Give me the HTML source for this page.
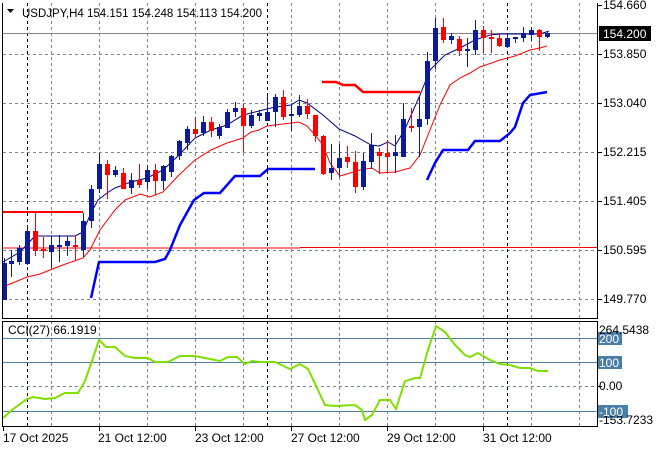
<!DOCTYPE html>
<html><head><meta charset="utf-8"><style>
html,body{margin:0;padding:0;background:#fff;}
svg{display:block;font-family:"Liberation Sans","DejaVu Sans",sans-serif;}
</style></head><body>
<svg width="660" height="450" viewBox="0 0 660 450" xmlns="http://www.w3.org/2000/svg">
<rect width="660" height="450" fill="#fff"/>
<g stroke="#7a8494" stroke-width="1" stroke-dasharray="3,3" fill="none">
<path d="M3 54.5H597M3 103.5H597M3 152.5H597M3 201.5H597M3 250.5H597M3 299.5H597"/>
<path d="M51.5 3V318M99.5 3V318M147.5 3V318M195.5 3V318M243.5 3V318M291.5 3V318M339.5 3V318M387.5 3V318M435.5 3V318M483.5 3V318M531.5 3V318M579.5 3V318"/>
<path d="M51.5 321V426M99.5 321V426M147.5 321V426M195.5 321V426M243.5 321V426M291.5 321V426M339.5 321V426M387.5 321V426M435.5 321V426M483.5 321V426M531.5 321V426M579.5 321V426"/>
<path d="M3 386.5H597"/>
</g>
<g stroke="#000" stroke-width="1" stroke-dasharray="3,3" fill="none">
<path d="M27.5 3V426M267.5 3V426M507.5 3V426"/>
</g>
<path d="M3 33.5H597" stroke="#7a8494" stroke-width="1"/>
<path d="M3 248H300M300 247.5H597" stroke="#ff0000" stroke-width="1"/>
<path d="M3 212H83" stroke="#ff0000" stroke-width="2"/>
<path d="M322 82H336L343 85H355L363 92H420" stroke="#ff0000" stroke-width="2.5" fill="none"/>
<polyline fill="none" stroke="#ff0000" stroke-width="1" points="3,287 27,277 40,274 60,266 83,258 90,250 100,230 115,210 125,200 140,194 150,197 163,192 179,175 195,160 211,150 227,143 243,138 251,132 259,130 267,126 283,124 299,122 307,126 315,135 323,145 330,163 340,176 360,170 372,168 380,173 395,172 410,168 420,155 430,130 440,105 450,85 460,78 470,73 480,67 500,60 515,56 530,50 540,48 547,46"/>
<polyline fill="none" stroke="#000080" stroke-width="1" points="3,262 20,252 35,236 75,236 83,232 90,215 98,200 107,193 115,188 131,182 147,178 163,170 179,155 195,138 211,130 227,125 243,115 259,111 275,107 291,105 299,100 307,103 323,115 339,129 355,136 371,145 379,146 388,142 395,146 405,129 420,95 430,70 445,55 460,48 475,40 490,35 500,34 540,34 549,31"/>
<polyline fill="none" stroke="#0000ff" stroke-width="2.5" points="91,298 99,262 155,262 165,259 170,250 180,225 194,200 204,193 220,193 235,176 260,176 268,169 315,169"/>
<polyline fill="none" stroke="#0000ff" stroke-width="2.5" points="427,180 435,163 443,150 468,150 475,141 500,141 510,133 515,127 523,103 530,95 547,92"/>
<g fill="#0c1aa0" stroke="#0c1aa0">
<path stroke-width="1" fill="none" d="M4.5 258V300M11.5 250V277M19.5 245V265M27.5 226V265M51.5 236V268M59.5 235V262M67.5 236V256M83.5 213V257M91.5 185V228M99.5 153V193M115.5 166V177M131.5 173V194M147.5 165V189M163.5 165V190M171.5 155V177M179.5 140V160M187.5 126V150M203.5 116V136M219.5 124V139M227.5 109V128M235.5 102V117M251.5 110V128M259.5 110V121M267.5 95V121M275.5 94V127M291.5 105V131M299.5 95V117M331.5 144V180M339.5 144V177M363.5 153V190M371.5 133V169M395.5 135V173M403.5 103V157M419.5 97V157M427.5 52V125M435.5 18V69M451.5 33V44M467.5 38V67M475.5 20V55M507.5 33V48M515.5 37V43M523.5 27V42M531.5 27V41M547.5 31V38"/>
<g stroke="none">
<rect x="2" y="263" width="5" height="37"/><rect x="9" y="261" width="5" height="3"/><rect x="17" y="248" width="5" height="14"/><rect x="25" y="231" width="5" height="33"/><rect x="49" y="245" width="5" height="7"/><rect x="57" y="245" width="5" height="2"/><rect x="65" y="241" width="5" height="5"/><rect x="81" y="221" width="5" height="29"/><rect x="89" y="189" width="5" height="32"/><rect x="97" y="164" width="5" height="25"/><rect x="113" y="170" width="5" height="5"/><rect x="129" y="180" width="5" height="8"/><rect x="145" y="170" width="5" height="12"/><rect x="161" y="166" width="5" height="15"/><rect x="169" y="156" width="5" height="16"/><rect x="177" y="141" width="5" height="15"/><rect x="185" y="129" width="5" height="14"/><rect x="201" y="122" width="5" height="11"/><rect x="217" y="127" width="5" height="9"/><rect x="225" y="112" width="5" height="16"/><rect x="233" y="108" width="5" height="4"/><rect x="249" y="115" width="5" height="11"/><rect x="257" y="113" width="5" height="3"/><rect x="265" y="112" width="5" height="9"/><rect x="273" y="97" width="5" height="15"/><rect x="289" y="114" width="5" height="2"/><rect x="297" y="106" width="5" height="9"/><rect x="329" y="168" width="5" height="5"/><rect x="337" y="158" width="5" height="10"/><rect x="361" y="161" width="5" height="26"/><rect x="369" y="145" width="5" height="17"/><rect x="393" y="152" width="5" height="4"/><rect x="401" y="119" width="5" height="38"/><rect x="417" y="119" width="5" height="8"/><rect x="425" y="61" width="5" height="58"/><rect x="433" y="28" width="5" height="33"/><rect x="449" y="36" width="5" height="4"/><rect x="465" y="49" width="5" height="2"/><rect x="473" y="30" width="5" height="20"/><rect x="505" y="38" width="5" height="9"/><rect x="513" y="37" width="5" height="2"/><rect x="521" y="33" width="5" height="5"/><rect x="529" y="30" width="5" height="5"/><rect x="545" y="33" width="5" height="4"/>
</g></g>
<g fill="#ff0000" stroke="#ff0000">
<path stroke-width="1" fill="none" d="M35.5 213V256M43.5 237V258M75.5 235V260M107.5 160V199M123.5 168V189M139.5 164V188M155.5 164V195M195.5 117V138M211.5 117V137M243.5 104V152M283.5 90V120M307.5 99V119M315.5 115V142M323.5 135V175M347.5 146V168M355.5 151V193M379.5 148V174M387.5 140V172M411.5 108V132M443.5 18V43M459.5 36V56M483.5 26V53M491.5 30V53M499.5 33V47M539.5 29V51"/>
<g stroke="none">
<rect x="33" y="231" width="5" height="20"/><rect x="41" y="249" width="5" height="2"/><rect x="73" y="245" width="5" height="2"/><rect x="105" y="164" width="5" height="11"/><rect x="121" y="173" width="5" height="16"/><rect x="137" y="180" width="5" height="5"/><rect x="153" y="170" width="5" height="11"/><rect x="193" y="129" width="5" height="5"/><rect x="209" y="122" width="5" height="9"/><rect x="241" y="108" width="5" height="18"/><rect x="281" y="97" width="5" height="20"/><rect x="305" y="106" width="5" height="8"/><rect x="313" y="115" width="5" height="21"/><rect x="321" y="136" width="5" height="38"/><rect x="345" y="157" width="5" height="5"/><rect x="353" y="162" width="5" height="25"/><rect x="377" y="152" width="5" height="4"/><rect x="385" y="153" width="5" height="4"/><rect x="409" y="126" width="5" height="2"/><rect x="441" y="27" width="5" height="13"/><rect x="457" y="39" width="5" height="12"/><rect x="481" y="30" width="5" height="8"/><rect x="489" y="37" width="5" height="2"/><rect x="497" y="38" width="5" height="8"/><rect x="537" y="30" width="5" height="7"/>
</g></g>
<path d="M3 338.5H597M3 362.5H597M3 411.5H597" stroke="#4a7fa8" stroke-width="1"/>
<polyline fill="none" stroke="#7fe000" stroke-width="2" points="3,418 12,410 27,399 33,397 45,399 55,398 65,393 78,393 85,381 93,358 99,340 106,347 115,347 125,356 135,358 148,358 155,362 168,362 180,356 195,356 205,358 220,361 228,357 237,357 245,364 252,361 260,362 275,362 290,369 300,364 308,369 318,390 325,405 335,406 355,405 362,410 365,420 372,415 380,400 390,400 396,409 405,381 415,378 420,378 428,350 436,326 445,332 455,345 465,355 470,357 478,353 490,360 500,364 510,365 520,368 530,368 538,371 548,371"/>
<g stroke="#000" stroke-width="1" fill="none">
<path d="M2.5 3V318.5H597.5V3M2.5 321.5H597.5V426.5H2.5Z"/>
<path d="M597.5 5.5H602M597.5 54.5H602M597.5 103.5H602M597.5 152.5H602M597.5 201.5H602M597.5 250.5H602M597.5 299.5H602M597.5 386.5H602"/>
<path d="M3.5 426V431M99.5 426V431M195.5 426V431M291.5 426V431M387.5 426V431M483.5 426V431"/>
</g>
<path d="M7 9H14L10.5 13Z" fill="#000"/>
<text x="22" y="17" font-size="11.5" fill="#000">USDJPY,H4  154.151 154.248 154.113 154.200</text>
<g font-size="12" fill="#000">
<text x="603" y="9">154.660</text>
<text x="603" y="58">153.850</text>
<text x="603" y="107">153.040</text>
<text x="603" y="156">152.215</text>
<text x="603" y="205">151.405</text>
<text x="603" y="254">150.595</text>
<text x="603" y="303">149.770</text>
</g>
<rect x="599" y="26" width="52" height="15" fill="#000"/>
<text x="603" y="38" font-size="12" fill="#fff">154.200</text>
<text x="8" y="334" font-size="12" fill="#000">CCI(27) 66.1919</text>
<rect x="598" y="332" width="24" height="13" fill="#4a7fa8"/>
<rect x="598" y="356" width="24" height="13" fill="#4a7fa8"/>
<rect x="598" y="405" width="30" height="13" fill="#4a7fa8"/>
<g font-size="12" fill="#000">
<text x="599" y="334">264.5438</text>
<text x="599" y="390">0.00</text>
<text x="599" y="424">-153.7233</text>
</g>
<g font-size="12" fill="#fff">
<text x="599" y="343">200</text>
<text x="599" y="367">100</text>
<text x="599" y="416">-100</text>
</g>
<g font-size="12" fill="#000">
<text x="3" y="442">17 Oct 2025</text>
<text x="98" y="442">21 Oct 12:00</text>
<text x="195" y="442">23 Oct 12:00</text>
<text x="291" y="442">27 Oct 12:00</text>
<text x="387" y="442">29 Oct 12:00</text>
<text x="483" y="442">31 Oct 12:00</text>
</g>
</svg>
</body></html>
